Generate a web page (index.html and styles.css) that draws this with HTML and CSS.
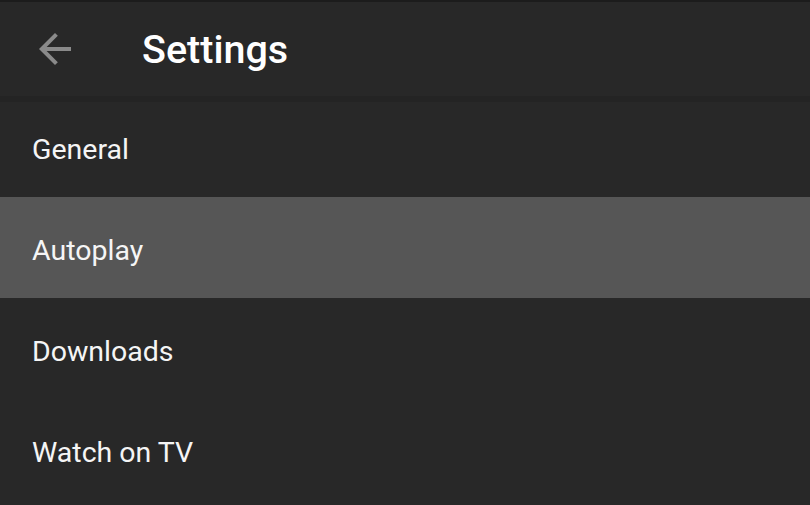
FILE: index.html
```html
<!DOCTYPE html>
<html>
<head>
<meta charset="utf-8">
<link rel="stylesheet" href="styles.css">
</head>
<body>
<div class="app">
  <header class="topbar">
    <button class="back" aria-label="Back">
      <svg viewBox="0 0 24 24" width="48" height="48"><path d="M20 11H7.83l5.59-5.59L12 4l-8 8 8 8 1.41-1.41L7.83 13H20v-2z" fill="#8a8a8a"/></svg>
    </button>
    <h1 class="title">Settings</h1>
  </header>
  <ul class="list">
    <li class="item">General</li>
    <li class="item selected">Autoplay</li>
    <li class="item">Downloads</li>
    <li class="item">Watch on TV</li>
  </ul>
</div>
</body>
</html>
```
FILE: styles.css
```css
html, body {
  margin: 0;
  padding: 0;
  background: #282828;
}
.app {
  width: 810px;
  height: 505px;
  overflow: hidden;
  font-family: Roboto, "Noto Sans", sans-serif;
  color: #f5f5f5;
}
.topbar {
  position: relative;
  z-index: 1;
  height: 96px;
  box-sizing: border-box;
  border-top: 2px solid #1c1c1c;
  background: #282828;
  box-shadow: 0 6px 0 0 #242424;
  display: flex;
  align-items: center;
}
.back {
  margin-left: 31px;
  width: 48px;
  height: 48px;
  padding: 0;
  border: 0;
  background: none;
  display: flex;
}
.title {
  margin: 0 0 0 63px;
  font-size: 39.5px;
  font-weight: 500;
  color: #ffffff;
}
.list {
  list-style: none;
  margin: 0;
  padding: 0;
}
.item {
  height: 101px;
  box-sizing: border-box;
  padding: 6px 0 0 32px;
  display: flex;
  align-items: center;
  font-size: 28.5px;
}
.item.selected {
  height: 101px;
  background: #565656;
}
```
